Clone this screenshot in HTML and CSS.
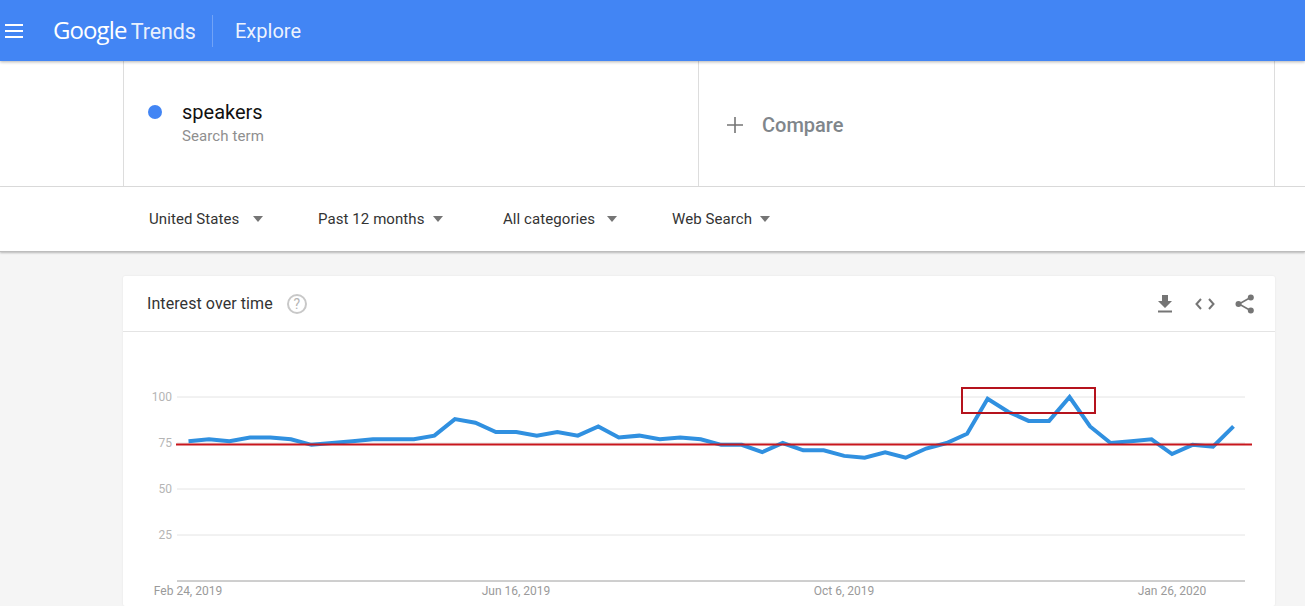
FILE: index.html
```html
<!DOCTYPE html>
<html lang="en">
<head>
  <meta charset="UTF-8">
  <title>Google Trends - Explore</title>
  <link rel="stylesheet" href="styles.css">
</head>
<body>

<header class="top-bar">
  <svg class="menu-icon" width="18" height="14" viewBox="0 0 18 14">
    <path d="M0 1h18M0 7h18M0 13h18" stroke="#fff" stroke-width="2" fill="none"/>
  </svg>
  <div class="logo"><span class="logo-google">Google</span> <span class="logo-trends">Trends</span></div>
  <div class="top-divider"></div>
  <div class="page-title">Explore</div>
</header>

<section class="terms-row">
  <div class="terms">
    <div class="term">
      <span class="term-dot"></span>
      <div>
        <div class="term-name">speakers</div>
        <div class="term-type">Search term</div>
      </div>
    </div>
    <div class="compare">
      <svg width="16" height="16" viewBox="0 0 16 16">
        <path d="M8 0v16M0 8h16" stroke="#757575" stroke-width="1.6" fill="none"/>
      </svg>
      <span class="compare-label">Compare</span>
    </div>
  </div>
</section>

<section class="filters">
  <div class="filter filter-wide">United States<span class="arrow"></span></div>
  <div class="filter filter-tight">Past 12 months<span class="arrow"></span></div>
  <div class="filter">All categories<span class="arrow"></span></div>
  <div class="filter filter-tight">Web Search<span class="arrow"></span></div>
</section>

<main class="content">
  <div class="card">
    <div class="card-header">
      <h2 class="card-title">Interest over time</h2>
      <span class="help-icon">?</span>
      <div class="card-actions">
        <!-- download -->
        <svg width="16" height="18" viewBox="0 0 16 18">
          <path d="M5 0h6v6h4l-7 7-7-7h4z" fill="#757575"/>
          <path d="M1 16.5h14" stroke="#757575" stroke-width="2"/>
        </svg>
        <!-- embed -->
        <svg width="20" height="12" viewBox="0 0 20 12">
          <path d="M6 1L1.5 6 6 11M14 1l4.500 5L14 11" stroke="#757575" stroke-width="2" fill="none"/>
        </svg>
        <!-- share -->
        <svg width="20" height="20" viewBox="0 0 20 20">
          <path d="M15.500 3.500L4 10l11.500 6.500" stroke="#757575" stroke-width="1.600" fill="none"/>
          <circle cx="15.800" cy="3.500" r="3" fill="#757575"/>
          <circle cx="3.500" cy="10" r="3" fill="#757575"/>
          <circle cx="15.800" cy="16.500" r="3" fill="#757575"/>
        </svg>
      </div>
    </div>

    <!-- viewBox uses page coordinates so the numbers read like the screen -->
    <svg class="chart" width="1152" height="274" viewBox="123 332 1152 274">
      <g class="grid">
        <line x1="177" y1="397" x2="1245" y2="397"/>
        <line x1="177" y1="443" x2="1245" y2="443"/>
        <line x1="177" y1="489" x2="1245" y2="489"/>
        <line x1="177" y1="535" x2="1245" y2="535"/>
      </g>
      <line class="axis" x1="177" y1="581" x2="1245" y2="581"/>

      <g class="y-labels">
        <text x="172" y="401">100</text>
        <text x="172" y="447">75</text>
        <text x="172" y="493">50</text>
        <text x="172" y="539">25</text>
      </g>
      <g class="x-labels">
        <text x="188" y="595">Feb 24, 2019</text>
        <text x="516" y="595">Jun 16, 2019</text>
        <text x="844" y="595">Oct 6, 2019</text>
        <text x="1172" y="595">Jan 26, 2020</text>
      </g>

      <!-- points are week,value -->
      <polyline class="trend" transform="translate(188.500 581) scale(20.49 -1.84)" vector-effect="non-scaling-stroke"
        points="0,76 1,77 2,76 3,78 4,78 5,77 6,74 7,75 8,76 9,77 10,77 11,77 12,79 13,88 14,86 15,81 16,81 17,79 18,81 19,79 20,84 21,78 22,79 23,77 24,78 25,77 26,74 27,74 28,70 29,75 30,71 31,71 32,68 33,67 34,70 35,67 36,72 37,75 38,80 39,99 40,92 41,87 42,87 43,100 44,84 45,75 46,76 47,77 48,69 49,74 50,73 51,84"/>

      <line class="mark-line" x1="176" y1="444.500" x2="1252" y2="444.500"/>
      <rect class="mark-box" x="962" y="388" width="133" height="25"/>
    </svg>
  </div>
</main>

</body>
</html>
```

FILE: styles.css
```css
html, body {
  height: 606px;
  overflow: hidden;
}

body {
  margin: 0;
  background-color: #f5f5f5;
  font-family: Roboto, "Liberation Sans", sans-serif;
}

.top-bar {
  display: flex;
  align-items: center;
  height: 61px;
  background-color: #4285f4;
  box-shadow: 0 1px 3px rgba(0,0,0,0.3);
  color: white;
  position: relative;
}

.menu-icon {
  margin-left: 5px;
}

.logo {
  margin-left: 30px;
  width: 159px;
  padding-bottom: 3px;
  white-space: nowrap;
  font-size: 21.500px;
  word-spacing: -1px;
}

.logo-google {
  font-family: "Open Sans", sans-serif;
  font-size: 24px;
  letter-spacing: -0.9px;
}

.logo-trends {
  color: rgba(255,255,255,0.9);
  letter-spacing: -0.1px;
}

.top-divider {
  width: 1px;
  height: 32px;
  background-color: rgba(255,255,255,0.25);
}

.page-title {
  margin-left: 22px;
  font-size: 20px;
  color: rgba(255,255,255,0.92);
}

.terms-row {
  background: white;
  border-bottom: 1px solid #ddd;
  padding: 0 30px 0 123px;
  height: 125px;
}

.terms {
  display: flex;
  height: 100%;
  border-left: 1px solid #ddd;
  border-right: 1px solid #ddd;
}

.term {
  display: flex;
  width: 575px;
  box-sizing: border-box;
  border-right: 1px solid #ddd;
  padding: 39px 0 0 24px;
}

.term-dot {
  width: 14px;
  height: 14px;
  margin: 5px 20px 0 -0.5px;
  border-radius: 50%;
  background-color: #4285f4;
  flex: none;
}

.term-name {
  margin-left: 0.5px;
  font-size: 20px;
  line-height: 24px;
  color: #111;
}

.term-type {
  margin: 3px 0 0 0.5px;
  font-size: 15px;
  line-height: 18px;
  letter-spacing: 0.1px;
  color: #8f8f8f;
}

.compare {
  display: flex;
  align-items: center;
  padding: 2px 0 0 28px;
}

.compare-label {
  margin-left: 19px;
  font-size: 20px;
  font-weight: 500;
  color: #80868b;
}

.filters {
  display: grid;
  grid-template-columns: 169px 185px 169px 200px;
  align-items: center;
  height: 64px;
  padding-left: 149px;
  background: white;
  border-bottom: 1px solid #bdbdbd;
  box-shadow: 0 1px 2px rgba(0,0,0,0.25);
  position: relative;
}

.filter {
  display: flex;
  align-items: center;
  font-size: 15px;
  letter-spacing: 0.08px;
  color: #333;
}

.arrow {
  width: 0;
  height: 0;
  margin-left: 12px;
  border-left: 5.500px solid transparent;
  border-right: 5.500px solid transparent;
  border-top: 6px solid #757575;
}

.filter-wide .arrow {
  margin-left: 13.500px;
}

.filter-tight .arrow {
  margin-left: 8px;
}

.content {
  padding: 24px 30px 0 123px;
}

.card {
  background: white;
  border-radius: 2px;
  box-shadow: 0 0 2px rgba(0,0,0,0.08);
}

.card-header {
  display: flex;
  align-items: center;
  height: 55px;
  padding: 0 20px 0 24px;
  border-bottom: 1px solid #e4e4e4;
}

.card-title {
  margin: 0;
  font-size: 16px;
  font-weight: 400;
  letter-spacing: 0.08px;
  color: #333;
}

.help-icon {
  width: 16px;
  height: 16px;
  margin-left: 14px;
  border: 2px solid #c8c8c8;
  border-radius: 50%;
  font-size: 14px;
  line-height: 16px;
  text-align: center;
  color: #b5b5b5;
}

.card-actions {
  display: flex;
  align-items: center;
  gap: 20px;
  margin-left: auto;
}

.card-actions svg:first-child {
  margin-right: 2px;
}

.chart {
  display: block;
}

.grid line {
  stroke: #e4e4e4;
  stroke-width: 1;
}

.axis {
  stroke: #9e9e9e;
  stroke-width: 1;
}

.y-labels text {
  font-size: 12px;
  text-anchor: end;
  fill: #b5b5b5;
}

.x-labels text {
  font-size: 12px;
  text-anchor: middle;
  fill: #9a9a9a;
}

.trend {
  fill: none;
  stroke: #3090e0;
  stroke-width: 4;
  stroke-linejoin: miter;
}

.mark-line {
  stroke: #c8161d;
  stroke-width: 2;
}

.mark-box {
  fill: none;
  stroke: #b5131d;
  stroke-width: 2;
}
```
